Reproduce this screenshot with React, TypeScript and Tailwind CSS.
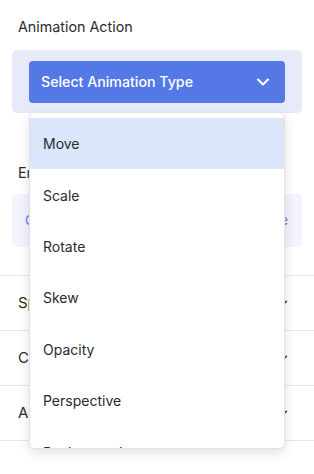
import { ChevronDown } from 'lucide-react';

const ANIMATION_TYPES = ['Move', 'Scale', 'Rotate', 'Skew', 'Opacity', 'Perspective', 'Background'];

const SECTIONS = ['Speed & Timing', 'Color Settings', 'Advanced Options'];

export default function App() {
  return (
    <div className="relative h-[474px] w-[314px] overflow-hidden bg-white font-['Inter','Noto_Sans',sans-serif] text-[#2b2b2b]">
      <div className="px-3 pt-[17px]">
        <p className="pl-[6px] text-[14.3px] leading-5">Animation Action</p>

        <div className="mt-[13px] rounded-[5px] bg-[#e6eaf9] px-[17px] pt-[11px] pb-[10px]">
          <button
            type="button"
            className="flex h-[42px] w-full items-center justify-between rounded-[4px] bg-[#5479e7] pl-[12px] pr-[12px] text-[14.2px] font-medium text-white"
          >
            Select Animation Type
            <ChevronDown size={20} strokeWidth={2.5} />
          </button>
        </div>

        <p className="mt-[50px] pl-[6px] text-[14.3px] leading-5">Entrance Effect</p>

        <div className="mt-[11px] flex h-[53px] items-center justify-between rounded-[4px] bg-[#f3f4fd] pl-[13px] pr-[14px] text-[13px]">
          <span className="text-[#5479e7]">Choose element</span>
          <span className="text-[#7d84a8]">None</span>
        </div>
      </div>

      <div className="mt-[28px] border-t border-[#e7e7e7]">
        {SECTIONS.map((s) => (
          <div
            key={s}
            className="flex h-[55px] items-center justify-between border-b border-[#e7e7e7] pl-[18px] pr-[24px] text-[15px]"
          >
            <span>{s}</span>
            <ChevronDown size={14} strokeWidth={2.4} className="text-[#333]" />
          </div>
        ))}
      </div>

      {/* open select menu */}
      <div className="absolute left-[29px] top-[112px] h-[337px] w-[256px] overflow-hidden rounded-[6px] border border-[#e2e2e2] bg-white pt-[5px] shadow-[0_4px_12px_rgba(0,0,0,0.12)]">
        {ANIMATION_TYPES.map((t, i) => (
          <div
            key={t}
            className={`flex h-[51.4px] items-center pl-[13px] text-[14px] text-[#2b2b2b] ${
              i === 0 ? 'bg-[#dbe6fb]' : ''
            }`}
          >
            {t}
          </div>
        ))}
      </div>
    </div>
  );
}
